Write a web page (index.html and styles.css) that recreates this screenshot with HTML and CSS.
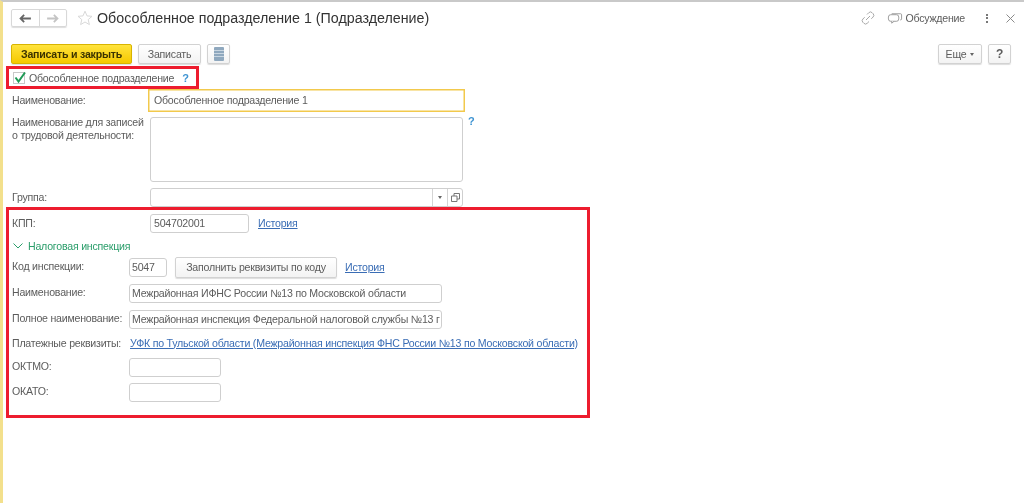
FILE: index.html
```html
<!DOCTYPE html>
<html lang="ru">
<head>
<meta charset="utf-8">
<title>Обособленное подразделение 1 (Подразделение)</title>
<link rel="stylesheet" href="styles.css">
</head>
<body>
<div class="page">
  <header class="head">
    <div class="nav">
      <span class="nav-btn"><svg width="13" height="9" viewBox="0 0 14 10"><path d="M1 5h12M5.500 1 1.500 5l4 4" fill="none" stroke="#666" stroke-width="2"/></svg></span>
      <span class="nav-btn"><svg width="13" height="9" viewBox="0 0 14 10"><path d="M1 5h12M8.500 1l4 4-4 4" fill="none" stroke="#c4c4c4" stroke-width="2"/></svg></span>
    </div>
    <svg class="star" width="16" height="16" viewBox="0 0 16 16"><path d="M8 1.200l2 4.700 5 .4-3.800 3.300 1.200 5L8 12l-4.400 2.600 1.200-5L1 6.300l5-.4z" fill="none" stroke="#d8d8d8"/></svg>
    <h1 class="title">Обособленное подразделение 1 (Подразделение)</h1>
    <div class="head-tools">
      <svg class="link-icon" width="14" height="14" viewBox="0 0 14 14"><path d="M6 3.500 7.800 1.700a2.300 2.300 0 0 1 3.300 0l1 1a2.300 2.300 0 0 1 0 3.300L10.300 7.800M8 10.500 6.200 12.300a2.300 2.300 0 0 1-3.300 0l-1-1a2.300 2.300 0 0 1 0-3.300L3.700 6.200M5 9l4-4" fill="none" stroke="#a8a8a8"/></svg>
      <span class="discuss"><svg width="16" height="14" viewBox="0 0 17 14"><path d="M5 2.500h9.500a1 1 0 0 1 1 1V8a1 1 0 0 1-1 1H14" fill="none" stroke="#999"/><rect x="1.500" y="3.500" width="11" height="7" rx="2.500" fill="#fff" stroke="#999"/><path d="M5 10.500v2l2.500-2" fill="#fff" stroke="#999"/></svg>Обсуждение</span>
      <span class="dots"><i></i><i></i><i></i></span>
      <svg class="close" width="9" height="9" viewBox="0 0 9 9"><path d="M.5.500l8 8M8.500.500l-8 8" stroke="#8a8a8a" fill="none"/></svg>
    </div>
  </header>

  <div class="toolbar">
    <button class="btn primary">Записать и закрыть</button>
    <button class="btn save">Записать</button>
    <button class="btn icon-btn"><svg width="10" height="14" viewBox="0 0 10 14"><rect width="10" height="14" rx="1" fill="#8fa8be"/><path d="M0 3.500h10M0 6.500h10M0 9.500h10" stroke="#c9d6e1"/></svg></button>
    <span class="spacer"></span>
    <button class="btn more">Еще <span class="caret"></span></button>
    <button class="btn help-btn">?</button>
  </div>

  <div class="check-row">
    <span class="check"><svg width="14" height="14" viewBox="0 0 14 14"><path d="M2.500 6.500l3 4L12 1.500" fill="none" stroke="#1f9a56" stroke-width="2"/></svg></span>
    <span class="text">Обособленное подразделение</span>
    <span class="hint">?</span>
  </div>

  <div class="row name-row">
    <label class="label">Наименование:</label>
    <div class="input focus">Обособленное подразделение 1</div>
  </div>

  <div class="row area-row">
    <label class="label two">Наименование для записей<br>о трудовой деятельности:</label>
    <div class="input area"></div>
    <span class="hint top">?</span>
  </div>

  <div class="row group-row">
    <label class="label">Группа:</label>
    <div class="input combo">
      <span class="fill"></span>
      <span class="cell"><span class="caret"></span></span>
      <span class="cell"><svg width="9" height="9" viewBox="0 0 9 9"><path d="M3 3V.500h5.500V6H6M.500 3H6v5.500H.500z" fill="none" stroke="#777"/></svg></span>
    </div>
  </div>

  <div class="row kpp-row">
    <label class="label">КПП:</label>
    <div class="input kpp">504702001</div>
    <a class="link">История</a>
  </div>

  <div class="tax-head">
    <svg width="10" height="6" viewBox="0 0 10 6"><path d="M.500.500 5 5 9.500.500" fill="none" stroke="#2a9d6a"/></svg>
    <span>Налоговая инспекция</span>
  </div>

  <div class="tax">
    <div class="trow code">
      <label class="label">Код инспекции:</label>
      <div class="input short">5047</div>
      <button class="btn fill-btn">Заполнить реквизиты по коду</button>
      <a class="link">История</a>
    </div>
    <div class="trow">
      <label class="label">Наименование:</label>
      <div class="input wide">Межрайонная ИФНС России №13 по Московской области</div>
    </div>
    <div class="trow">
      <label class="label">Полное наименование:</label>
      <div class="input wide">Межрайонная инспекция Федеральной налоговой службы №13 г</div>
    </div>
    <div class="trow pay">
      <label class="label">Платежные реквизиты:</label>
      <a class="link">УФК по Тульской области (Межрайонная инспекция ФНС России №13 по Московской области)</a>
    </div>
    <div class="trow oktmo">
      <label class="label">ОКТМО:</label>
      <div class="input mid"></div>
    </div>
    <div class="trow okato">
      <label class="label">ОКАТО:</label>
      <div class="input mid"></div>
    </div>
  </div>

  <div class="mark mark-check"></div>
  <div class="mark mark-tax"></div>
</div>
</body>
</html>
```
FILE: styles.css
```css
* { box-sizing: border-box; }
html, body { margin: 0; height: 100%; }
body { background: #fff; overflow: hidden; }
.page {
  position: relative;
  height: 503px;
  border-top: 2px solid #c9c9c9;
  border-left: 3px solid #f3e08c;
  font: 10.6px/13px "Liberation Sans", Arial, sans-serif;
  letter-spacing: -.22px;
  color: #5c5c5c;
  padding-left: 8px;
  filter: blur(.3px);
}
.head { display: flex; align-items: center; height: 18px; margin-top: 7px; }
.nav { display: flex; width: 56px; height: 18px; border: 1px solid #d8d8d8; border-radius: 2px; box-shadow: 0 1px 1px #ddd; }
.nav-btn { flex: 1; display: flex; align-items: center; justify-content: center; }
.nav-btn + .nav-btn { border-left: 1px solid #d8d8d8; }
.star { margin-left: 10px; }
.title { margin: 0 0 0 4px; font-size: 14.25px; line-height: 18px; font-weight: 400; letter-spacing: 0; color: #333; white-space: nowrap; }
.head-tools { margin-left: auto; display: flex; align-items: center; padding-right: 9px; }
.discuss { display: flex; align-items: center; gap: 2px; margin-left: 12px; color: #5c5c5c; }
.dots { display: flex; flex-direction: column; gap: 1.500px; margin-left: 21px; }
.dots i { display: block; width: 2px; height: 2px; background: #777; }
.close { margin-left: 18px; }
.toolbar { display: flex; gap: 6px; height: 20px; margin-top: 17px; padding-right: 13px; }
.spacer { flex: 1; }
.btn {
  height: 20px; padding: 0; font: inherit; letter-spacing: inherit; color: #5c5c5c; background: linear-gradient(#fff, #f3f3f3);
  border: 1px solid #d2d2d2; border-radius: 2px; box-shadow: 0 1px 1px #ddd;
  display: inline-flex; align-items: center; justify-content: center;
}
.primary { width: 121px; font-weight: 700; color: #3b3300; background: linear-gradient(#ffe33c, #f5c800); border-color: #d8b400; }
.save { width: 63px; }
.icon-btn { width: 23px; }
.more { width: 44px; gap: 4px; }
.help-btn { width: 23px; font-weight: 700; font-size: 12px; }
.caret { display: inline-block; border: 2px solid transparent; border-top: 3px solid #666; border-bottom: 0; }
.check-row { display: flex; align-items: center; height: 14px; margin-top: 7px; padding-left: 2px; }
.check { width: 12px; height: 12px; border: 1px solid #c8c8c8; display: flex; overflow: visible; }
.check svg { flex: none; margin: -2px 0 0 -1px; }
.check-row .text { margin-left: 4px; }
.hint { color: #3f94d2; font-weight: 700; font-size: 11px; }
.check-row .hint { margin-left: 8px; }
.row { display: flex; }
.label { white-space: nowrap; padding-left: 1px; margin-bottom: 2px; }
.row > .label { width: 137px; }
.input { border: 1px solid #cfcfcf; border-radius: 3px; background: #fff; padding: 0 2px; white-space: nowrap; overflow: hidden; display: flex; align-items: center; height: 19px; color: #5c5c5c; }
.name-row { margin-top: 4px; align-items: center; height: 23px; }
.name-row .label { margin-bottom: 0; }
.focus { width: 317px; height: 23px; border: 1px solid #f2c94c; box-shadow: inset 0 0 0 .5px #f2c94c; border-radius: 0; padding-left: 5px; }
.area-row { margin-top: 5px; height: 65px; }
.area-row .label { margin: -1px 2px 0 0; }
.area { width: 313px; height: 65px; }
.hint.top { margin: 0 0 0 5px; line-height: 9px; }
.group-row { margin-top: 6px; height: 19px; align-items: center; }
.group-row .label { width: 139px; margin-bottom: 0; }
.combo { width: 313px; padding: 0; }
.fill { flex: 1; }
.cell { width: 15px; height: 100%; border-left: 1px solid #d4d4d4; display: flex; align-items: center; justify-content: center; }
.kpp-row { margin-top: 7px; height: 19px; align-items: center; }
.kpp-row .label { width: 139px; margin-bottom: 0; }
.kpp { width: 99px; padding-left: 3px; }
.link { color: #3a6db5; text-decoration: underline; }
.kpp-row .link { margin-left: 9px; }
.tax-head { display: flex; align-items: center; gap: 5px; margin: 6px 0 0 2px; height: 14px; color: #2a9d6a; }
.tax { display: flex; flex-direction: column; margin-top: 4px; }
.trow { display: flex; align-items: center; height: 19px; margin-bottom: 7px; }
.trow > .label { width: 118px; flex: none; }
.short { width: 38px; }
.wide { width: 313px; }
.mid { width: 92px; }
.code { height: 21px; margin-bottom: 6px; }
.fill-btn { width: 162px; height: 21px; margin-left: 8px; }
.code .link { margin-left: 8px; }
.pay { height: 14px; margin-bottom: 8px; }
.pay .label { margin-bottom: 0; }
.pay .link { margin-left: 1px; white-space: nowrap; }
.oktmo { margin-bottom: 6px; }
.mark { position: absolute; border: 3px solid #ed1c2e; }
.mark-check { left: 3px; top: 64px; width: 193px; height: 23px; }
.mark-tax { left: 3px; top: 205px; width: 584px; height: 211px; }
```
